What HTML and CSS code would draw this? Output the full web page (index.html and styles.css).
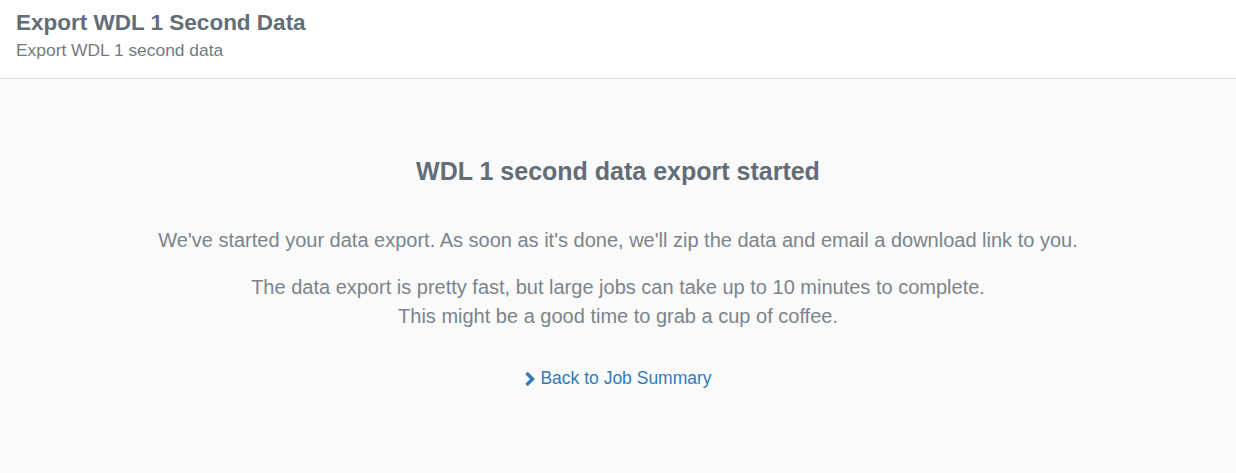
FILE: index.html
```html
<!DOCTYPE html>
<html>
<head>
<meta charset="utf-8">
<link rel="stylesheet" href="styles.css">
</head>
<body>
<header class="page-header">
  <h1 class="page-title">Export WDL 1 Second Data</h1>
  <div class="page-subtitle">Export WDL 1 second data</div>
</header>
<main class="content">
  <h2 class="status-title">WDL 1 second data export started</h2>
  <p class="msg">We've started your data export. As soon as it's done, we'll zip the data and email a download link to you.</p>
  <p class="msg">The data export is pretty fast, but large jobs can take up to 10 minutes to complete.<br>This might be a good time to grab a cup of coffee.</p>
  <a class="back-link" href="#"><svg class="chev" viewBox="0 0 11 16" width="11" height="16"><path d="M2.5 2 L8.5 8 L2.5 14" fill="none" stroke="currentColor" stroke-width="3.4"/></svg>Back to Job Summary</a>
</main>
</body>
</html>
```

FILE: styles.css
```css
html, body {
  margin: 0;
  padding: 0;
  height: 100%;
}
body {
  font-family: "Liberation Sans", Arial, sans-serif;
  background: #fafafa;
  color: #7a8288;
}
.page-header {
  background: #fff;
  border-bottom: 1px solid #dcdcdc;
  padding: 9px 16px 18px;
}
.page-title {
  margin: 0;
  font-size: 22.5px;
  line-height: 28px;
  font-weight: bold;
  color: #626d77;
}
.page-subtitle {
  font-size: 17.4px;
  line-height: 20px;
  margin-top: 3px;
  color: #727b83;
}
.content {
  display: flex;
  flex-direction: column;
  align-items: center;
  text-align: center;
  padding-top: 77px;
}
.status-title {
  margin: 0 0 40px;
  font-size: 25px;
  line-height: 30px;
  font-weight: bold;
  color: #626d77;
}
.msg {
  margin: 0 0 18px;
  font-size: 20px;
  line-height: 29px;
  color: #7b848c;
}
.back-link {
  margin-top: 19px;
  display: inline-flex;
  align-items: center;
  gap: 5px;
  font-size: 17.5px;
  color: #337ab7;
  text-decoration: none;
}
.chev {
  display: block;
}
```
